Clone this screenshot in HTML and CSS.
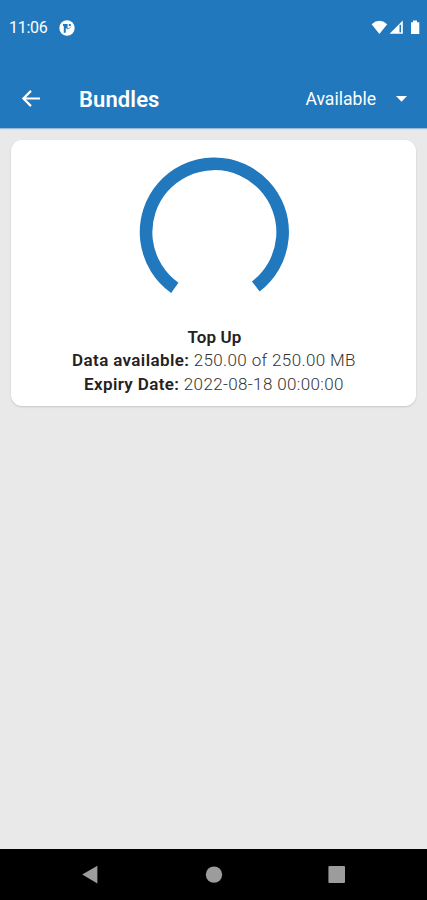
FILE: index.html
```html
<!DOCTYPE html>
<html lang="en">
<head>
    <meta charset="UTF-8">
    <title>Bundles</title>
    <link rel="stylesheet" href="styles.css">
</head>
<body>
    <header>
        <div class="status-bar">
            <span class="clock">11:06</span>
            <svg class="notification" width="16" height="16" viewBox="0 0 16 16">
                <circle cx="8" cy="8" r="7.7" fill="#fff"/>
                <path d="M4 4H8.6V8.6H6.8V12.8H4.8V6H4Z" fill="#2178bd"/>
                <rect x="9.8" y="4" width="2" height="2" fill="#2178bd"/>
                <path d="M8 8.8Q11 9 11.8 6.6" fill="none" stroke="#2178bd" stroke-width="0.7"/>
            </svg>
            <svg class="system" width="50" height="18" viewBox="0 0 50 18">
                <!-- Wifi -->
                <path d="M0.6 5.3Q8.4-1.6 16.2 5.3L8.4 15Z" fill="#fff"/>
                <!-- Signal -->
                <path d="M31.8 1.6V14.8H18.6Z" fill="#fff"/>
                <path d="M29.3 5.8V13.4" fill="none" stroke="#2178bd" stroke-width="1.6"/>
                <!-- Battery -->
                <path d="M40 3.2H42V1.6H46V3.2H48.3V15H40Z" fill="#fff"/>
            </svg>
        </div>
        <div class="toolbar">
            <svg class="back" width="20" height="20" viewBox="0 0 20 20">
                <path d="M19 9.5H2.4M10 1.9L2.4 9.5L10 17.1" fill="none" stroke="#fff" stroke-width="2.2"/>
            </svg>
            <h1>Bundles</h1>
            <div class="filter">
                <span>Available</span>
                <svg width="12" height="6" viewBox="0 0 12 6">
                    <path d="M0 0H11L5.5 5.8Z" fill="#fff"/>
                </svg>
            </div>
        </div>
    </header>

    <main>
        <section class="card">
            <svg class="gauge" width="150" height="150" viewBox="0 0 150 150">
                <path d="M35.8 130.8A68.3 68.3 0 1 1 116.8 129.4" fill="none" stroke="#2178bd" stroke-width="12.6"/>
            </svg>
            <div class="details">
                <p class="name">Top Up</p>
                <p><b>Data available:</b> 250.00 of 250.00 MB</p>
                <p><b>Expiry Date:</b> 2022-08-18 00:00:00</p>
            </div>
        </section>
    </main>

    <nav>
        <svg width="18" height="20" viewBox="0 0 18 20">
            <path d="M1.2 9.6L16.4 0.8V18.4Z" fill="#9c9c9c"/>
        </svg>
        <svg width="18" height="20" viewBox="0 0 18 20">
            <circle cx="9" cy="9.6" r="8.2" fill="#9c9c9c"/>
        </svg>
        <svg width="18" height="20" viewBox="0 0 18 20">
            <rect x="0.4" y="1" width="16.6" height="17" rx="1" fill="#9c9c9c"/>
        </svg>
    </nav>
</body>
</html>
```

FILE: styles.css
```css
html, body {
    height: 100%;
    margin: 0;
    padding: 0;
}
body {
    display: flex;
    flex-direction: column;
    background: #e9e9e9;
    font-family: Roboto, Arial, sans-serif;
    overflow: hidden;
}
svg {
    display: block;
    flex-shrink: 0;
}
header {
    height: 128px;
    background: #2178bd;
    color: #fff;
    box-shadow: 0 1px 1px rgba(33,120,189,0.4);
}
.status-bar {
    display: flex;
    align-items: center;
    height: 55px;
    padding: 0 6px 0 9px;
}
.clock {
    font-size: 16px;
    letter-spacing: -0.3px;
}
.notification {
    margin-left: 12px;
}
.system {
    margin-left: auto;
}
.toolbar {
    display: flex;
    align-items: center;
    height: 56px;
    margin-top: 16px;
    padding: 0 19px 0 21px;
}
.toolbar h1 {
    margin: 1px 0 0 38px;
    font-size: 22px;
    font-weight: 600;
    letter-spacing: 0.1px;
}
.filter {
    display: flex;
    align-items: center;
    gap: 20px;
    margin-left: auto;
    font-size: 17.6px;
}
main {
    flex: 1;
    padding: 12px 11px;
}
.card {
    display: flex;
    flex-direction: column;
    align-items: center;
    height: 266px;
    background: #fff;
    border-radius: 11px;
    box-shadow: 0 1px 2px rgba(0,0,0,0.15);
}
.gauge {
    margin-top: 17px;
}
.details {
    margin-top: 19px;
    padding-left: 1px;
    font-size: 17px;
    line-height: 23.3px;
    letter-spacing: 0.37px;
    text-align: center;
    color: #333;
}
.details p {
    margin: 0;
    font-weight: 300;
}
.details b, .details .name {
    font-weight: 600;
    color: #222;
}
.details .name {
    padding-left: 1px;
    letter-spacing: 0.1px;
}
nav {
    display: flex;
    justify-content: space-between;
    align-items: center;
    height: 51px;
    padding: 0 81px;
    background: #000;
}
```
